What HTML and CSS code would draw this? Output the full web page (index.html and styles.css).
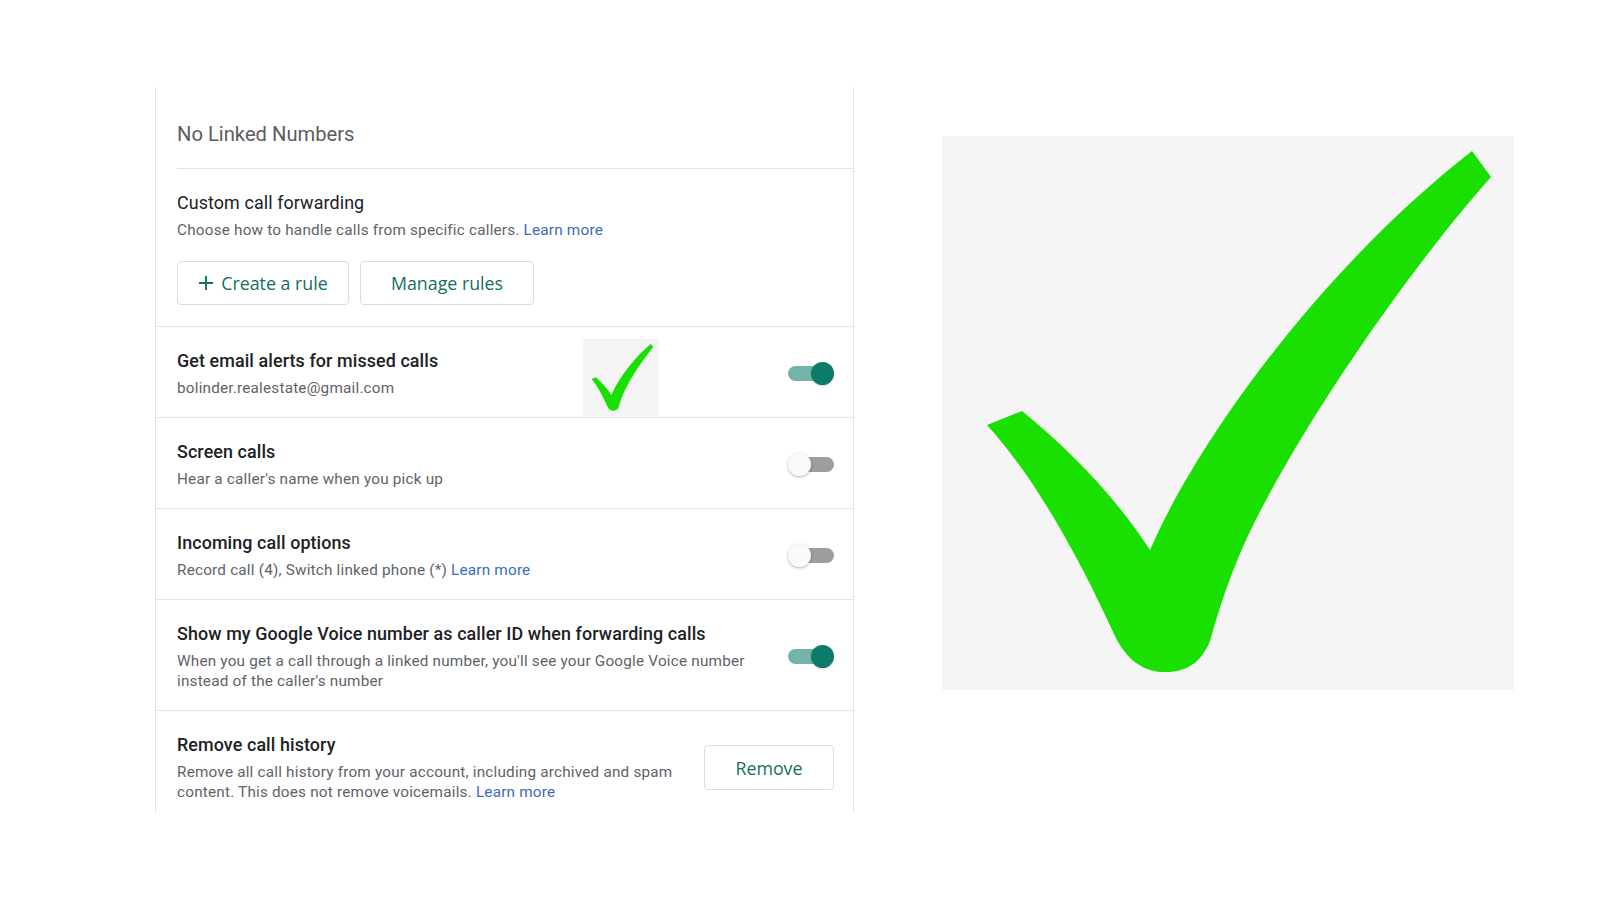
FILE: index.html
```html
<!DOCTYPE html>
<html lang="en">
<head>
<meta charset="utf-8">
<title>Calls settings</title>
<link rel="stylesheet" href="styles.css">
</head>
<body>
<div class="stage">
  <section class="panel">
    <div class="linked">No Linked Numbers</div>

    <div class="custom">
      <div class="title light">Custom call forwarding</div>
      <div class="desc">Choose how to handle calls from specific callers. <a class="link" href="#">Learn more</a></div>
      <div class="btn-row">
        <button class="btn btn-create"><svg class="plus" viewBox="0 0 16 16" width="16" height="16"><path d="M8 1V15M1 8H15" stroke="currentColor" stroke-width="1.9" fill="none"/></svg>Create a rule</button>
        <button class="btn btn-manage">Manage rules</button>
      </div>
    </div>

    <div class="row row-email">
      <div class="text">
        <div class="title">Get email alerts for missed calls</div>
        <div class="desc">bolinder.realestate@gmail.com</div>
      </div>
      <div class="toggle on"><span class="track"></span><span class="knob"></span></div>
      <div class="sticker">
        <svg viewBox="0 0 572 554" preserveAspectRatio="none" width="100%" height="100%">
          <path fill="#19e000" d="M530 15 L549 41 C480 118 380 258 322 368 C298 412 282 455 268 505 C258 530 240 537 220 536 C198 535 182 520 172 498 C140 428 96 345 45 289 L80 275 C128 314 176 364 208 414 C250 316 370 140 530 15 Z"/>
        </svg>
      </div>
    </div>

    <div class="row">
      <div class="text">
        <div class="title">Screen calls</div>
        <div class="desc">Hear a caller's name when you pick up</div>
      </div>
      <div class="toggle"><span class="track"></span><span class="knob"></span></div>
    </div>

    <div class="row">
      <div class="text">
        <div class="title">Incoming call options</div>
        <div class="desc">Record call (4), Switch linked phone (*) <a class="link" href="#">Learn more</a></div>
      </div>
      <div class="toggle"><span class="track"></span><span class="knob"></span></div>
    </div>

    <div class="row">
      <div class="text text-wide">
        <div class="title">Show my Google Voice number as caller ID when forwarding calls</div>
        <div class="desc">When you get a call through a linked number, you'll see your Google Voice number instead of the caller's number</div>
      </div>
      <div class="toggle on"><span class="track"></span><span class="knob"></span></div>
    </div>

    <div class="row">
      <div class="text text-narrow">
        <div class="title">Remove call history</div>
        <div class="desc">Remove all call history from your account, including archived and spam content. This does not remove voicemails. <a class="link" href="#">Learn more</a></div>
      </div>
      <button class="btn btn-remove">Remove</button>
    </div>
  </section>

  <div class="bigcheck">
    <svg viewBox="0 0 572 554" width="572" height="554">
      <path fill="#19e000" d="M530 15 L549 41 C480 118 380 258 322 368 C298 412 282 455 268 505 C258 530 240 537 220 536 C198 535 182 520 172 498 C140 428 96 345 45 289 L80 275 C128 314 176 364 208 414 C250 316 370 140 530 15 Z"/>
    </svg>
  </div>
</div>
</body>
</html>
```

FILE: styles.css
```css
* { box-sizing: border-box; }

html, body {
  margin: 0;
  background: #ffffff;
}

body {
  font-family: Roboto, "Liberation Sans", Arial, sans-serif;
  color: #202124;
  width: 1601px;
  height: 900px;
  overflow: hidden;
}

.stage {
  display: flex;
  align-items: flex-start;
  padding: 87px 0 0 155px;
}

.panel {
  width: 699px;
  height: 726px;
  overflow: hidden;
  border-left: 1px solid #e3e3e3;
  border-right: 1px solid #e3e3e3;
  display: flex;
  flex-direction: column;
}

.linked {
  margin-left: 21px;
  padding: 33px 0 20px;
  font-size: 20.2px;
  line-height: 28px;
  color: #5a5d61;
  border-bottom: 1px solid #e3e3e3;
  flex: none;
}

.custom {
  padding: 22px 20px 21px 21px;
  border-bottom: 1px solid #e3e3e3;
  flex: none;
}

.title {
  font-size: 17.9px;
  line-height: 24px;
  font-weight: 500;
  color: #202124;
  letter-spacing: 0.1px;
}

.title.light {
  font-weight: 400;
}

.desc {
  margin-top: 5px;
  font-size: 15.3px;
  line-height: 20px;
  color: #5f6368;
  letter-spacing: 0.2px;
}

.link {
  color: #3a6bbd;
  text-decoration: none;
}

.btn-row {
  display: flex;
  gap: 11px;
  margin-top: 21px;
}

.btn {
  height: 44px;
  background: #ffffff;
  border: 1px solid #dadce0;
  border-radius: 4px;
  font-family: "Open Sans", Roboto, sans-serif;
  font-size: 17.8px;
  color: #14705f;
  display: inline-flex;
  align-items: center;
  justify-content: center;
  padding: 0;
  cursor: pointer;
}

.btn-create {
  width: 172px;
  gap: 7px;
}

.plus {
  display: block;
  flex: none;
}

.btn-manage {
  width: 174px;
}

.btn-remove {
  width: 130px;
  height: 45px;
  flex: none;
}

.row {
  position: relative;
  display: flex;
  align-items: center;
  justify-content: space-between;
  padding: 22px 19px 19px 21px;
  border-bottom: 1px solid #e3e3e3;
  flex: none;
}

.text {
  min-width: 0;
}

.text-wide {
  width: 590px;
}

.text-narrow {
  width: 520px;
}

.toggle {
  position: relative;
  width: 46px;
  height: 24px;
  flex: none;
}

.track {
  position: absolute;
  left: 3px;
  top: 4.5px;
  width: 43px;
  height: 15px;
  border-radius: 8px;
  background: #9e9e9e;
}

.knob {
  position: absolute;
  left: 0;
  top: 0.5px;
  width: 23px;
  height: 23px;
  border-radius: 50%;
  background: #fafafa;
  box-shadow: 0 1px 3px rgba(0, 0, 0, 0.3);
}

.toggle.on .track {
  left: 0;
  width: 42px;
  background: #74b3a9;
}

.toggle.on .knob {
  left: auto;
  right: 0;
  background: #0e7a69;
  box-shadow: 0 1px 2px rgba(0, 0, 0, 0.15);
}

.sticker {
  position: absolute;
  left: 427px;
  top: 12px;
  width: 76px;
  height: 77px;
  background: #f4f4f4;
  padding: 3px;
}

.bigcheck {
  margin: 49px 0 0 88px;
  width: 572px;
  height: 554px;
  background: #f5f5f5;
  flex: none;
}

.bigcheck svg {
  display: block;
}
```
